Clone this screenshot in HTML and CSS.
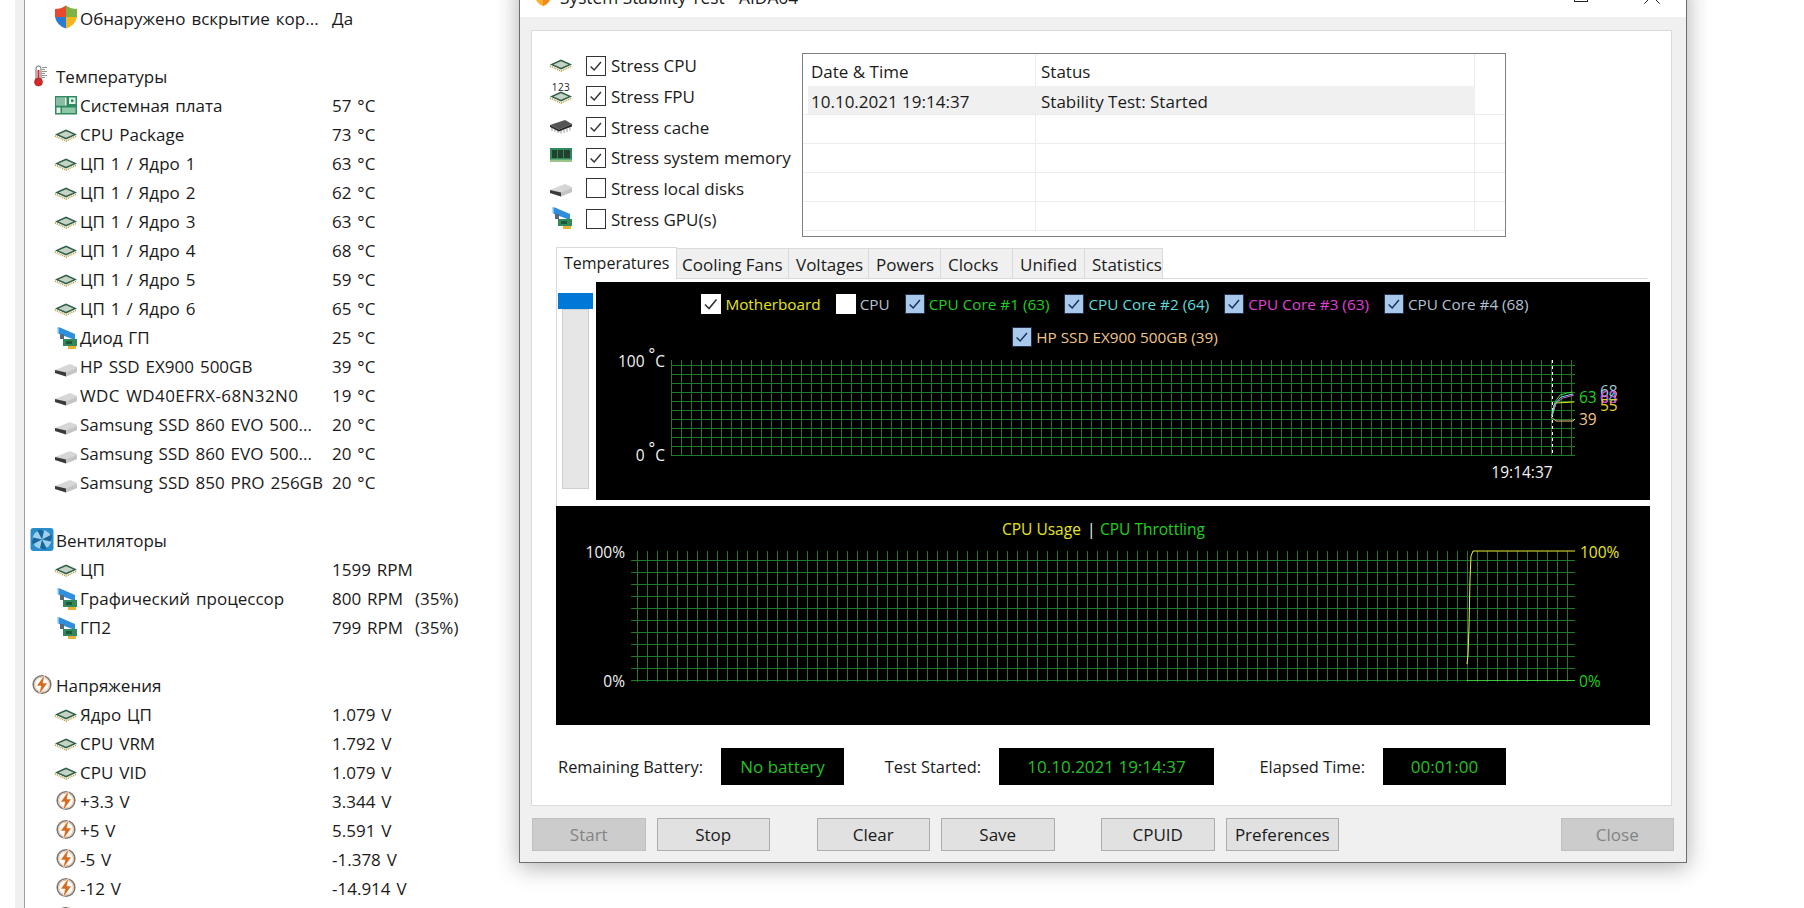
FILE: index.html
```html
<!DOCTYPE html>
<html lang="ru">
<head>
  <meta charset="UTF-8">
  <meta name="viewport" content="width=device-width, initial-scale=1.0">
  <title>System Stability Test - AIDA64</title>
  <link rel="stylesheet" href="styles.css">
</head>
<body>

  <!-- Shared icons -->
  <svg class="icon-defs" aria-hidden="true">
    <symbol id="chip" viewBox="0 -3 24 30">
      <polyline points="1,12 12,17 23,12" fill="none" stroke="#b39a3a" stroke-width="1.6" stroke-dasharray="1 1"/>
      <polygon points="1,10.5 12,5.5 23,10.5 12,15.5" fill="#2f5f48"/>
      <polygon points="4.5,10.5 12,7.2 19.5,10.5 12,13.8" fill="#c5d2c4"/>
    </symbol>
    <symbol id="drive" viewBox="0 -3 24 30">
      <polygon points="1,14 16,8 23,11 23,16 12,20.5 1,17" fill="#d6d6d6"/>
      <polygon points="1,14 12,16.5 12,20.5 1,17" fill="#3a3a3a"/>
      <polygon points="12,16.5 23,12 23,16 12,20.5" fill="#c4c4c4"/>
    </symbol>
    <symbol id="gpu" viewBox="0 -3 24 30">
      <polygon points="3.5,0.5 6,0.5 21,7 21,13 5,7" fill="#2f8fdc"/>
      <polygon points="3.5,0.5 5,0.5 5,7 3.5,6" fill="#7cc0ee"/>
      <rect x="6" y="7" width="4" height="5" fill="#556a78"/>
      <rect x="9" y="12" width="14" height="7" fill="#33885a"/>
      <rect x="12" y="14" width="6" height="3" fill="#1c5a3c"/>
      <rect x="14" y="19" width="8" height="3" fill="#e5b23a"/>
    </symbol>
    <symbol id="bolt" viewBox="0 -3 24 30">
      <circle cx="12" cy="9.5" r="8.8" fill="none" stroke="#777" stroke-width="1.6"/>
      <circle cx="12" cy="9.5" r="7.4" fill="#fff" stroke="#e9b48e" stroke-width="1"/>
      <polygon points="15,-1 6.5,11 11,11 8.5,20.5 17.5,8 13,8" fill="#d9691c" stroke="#fff" stroke-width="0.6"/>
    </symbol>
    <symbol id="tick" viewBox="0 0 20 20">
      <polyline points="4,10.5 8,14.5 15.5,5.5" fill="none" stroke="currentColor" stroke-width="1.6"/>
    </symbol>
    <pattern id="grid-temp-v" patternUnits="userSpaceOnUse" x="75" y="0" width="10" height="20">
      <rect width="1" height="20" fill="#1f7a27"/>
    </pattern>
    <pattern id="grid-temp-h" patternUnits="userSpaceOnUse" x="0" y="83" width="20" height="9">
      <rect width="20" height="1" fill="#1f7a27"/>
    </pattern>
    <pattern id="grid-cpu-v" patternUnits="userSpaceOnUse" x="81" y="0" width="10" height="20">
      <rect width="1" height="20" fill="#1f7a27"/>
    </pattern>
    <pattern id="grid-cpu-h" patternUnits="userSpaceOnUse" x="0" y="54" width="20" height="12">
      <rect width="20" height="1" fill="#1f7a27"/>
    </pattern>
  </svg>

  <div class="desktop">
    <div class="strip"></div>

    <!-- Sensor list behind the window -->
    <div class="sensors">
      <div class="row">
        <svg class="ico" viewBox="0 -3 24 30">
          <path d="M1 1 Q7 1 12 -2.500 L12 9 L1 9 Z" fill="#e8482c"/>
          <path d="M12 -2.500 Q17 1 23 1 L23 9 L12 9 Z" fill="#7db343"/>
          <path d="M1 9 L12 9 L12 20.500 Q3 18 1 9 Z" fill="#2b7bd2"/>
          <path d="M12 9 L23 9 Q21 18 12 20.500 Z" fill="#f5b51c"/>
        </svg>
        <span class="name">Обнаружено вскрытие кор...</span><span>Да</span>
      </div>
      <div class="row"></div>

      <div class="row group">
        <svg class="ico" viewBox="0 -3 24 30">
          <rect x="6" y="0" width="5" height="16" rx="2.500" fill="#fff" stroke="#666"/>
          <rect x="7.500" y="4" width="2" height="12" fill="#d42a2a"/>
          <circle cx="8.500" cy="16" r="4" fill="#d42a2a" stroke="#8a2020" stroke-width="0.600"/>
          <path d="M12 1.500H17M12 3.500H15M12 5.500H17M12 7.500H15M12 9.500H17M12 11.500H15" stroke="#777" stroke-width="0.800"/>
        </svg>
        <span class="name">Температуры</span>
      </div>
      <div class="row">
        <svg class="ico" viewBox="0 -3 24 30">
          <rect x="1" y="1" width="22" height="18.500" fill="#2f8a62"/>
          <rect x="2.500" y="2.500" width="10" height="8" fill="#e4efe8"/>
          <path d="M4 2.500V10.500M6 2.500V10.500M8 2.500V10.500M10 2.500V10.500" stroke="#2f8a62"/>
          <rect x="15" y="2.500" width="6.500" height="6.500" fill="#e4efe8"/>
          <rect x="17" y="4.500" width="2.500" height="2.500" fill="#2f8a62"/>
          <rect x="2.500" y="12.500" width="4" height="5.500" fill="#e4efe8"/>
          <rect x="8" y="12.500" width="13.500" height="5.500" fill="#8cc7a6"/>
        </svg>
        <span class="name">Системная плата</span><span>57 °C</span>
      </div>
      <div class="row"><svg class="ico"><use href="#chip"/></svg><span class="name">CPU Package</span><span>73 °C</span></div>
      <div class="row"><svg class="ico"><use href="#chip"/></svg><span class="name">ЦП 1 / Ядро 1</span><span>63 °C</span></div>
      <div class="row"><svg class="ico"><use href="#chip"/></svg><span class="name">ЦП 1 / Ядро 2</span><span>62 °C</span></div>
      <div class="row"><svg class="ico"><use href="#chip"/></svg><span class="name">ЦП 1 / Ядро 3</span><span>63 °C</span></div>
      <div class="row"><svg class="ico"><use href="#chip"/></svg><span class="name">ЦП 1 / Ядро 4</span><span>68 °C</span></div>
      <div class="row"><svg class="ico"><use href="#chip"/></svg><span class="name">ЦП 1 / Ядро 5</span><span>59 °C</span></div>
      <div class="row"><svg class="ico"><use href="#chip"/></svg><span class="name">ЦП 1 / Ядро 6</span><span>65 °C</span></div>
      <div class="row"><svg class="ico"><use href="#gpu"/></svg><span class="name">Диод ГП</span><span>25 °C</span></div>
      <div class="row"><svg class="ico"><use href="#drive"/></svg><span class="name">HP SSD EX900 500GB</span><span>39 °C</span></div>
      <div class="row"><svg class="ico"><use href="#drive"/></svg><span class="name name-wide">WDC WD40EFRX-68N32N0</span><span>19 °C</span></div>
      <div class="row"><svg class="ico"><use href="#drive"/></svg><span class="name">Samsung SSD 860 EVO 500...</span><span>20 °C</span></div>
      <div class="row"><svg class="ico"><use href="#drive"/></svg><span class="name">Samsung SSD 860 EVO 500...</span><span>20 °C</span></div>
      <div class="row"><svg class="ico"><use href="#drive"/></svg><span class="name">Samsung SSD 850 PRO 256GB</span><span>20 °C</span></div>
      <div class="row"></div>

      <div class="row group">
        <svg class="ico" viewBox="0 -3 24 30">
          <rect x="0.500" y="-2" width="23" height="23" rx="3" fill="#2a8dc9"/>
          <circle cx="12" cy="9.500" r="9.500" fill="#9ed0ec"/>
          <path d="M12 9.500 L7 0 Q12 -1 14 1 Z M12 9.500 L21.500 4.500 Q22.500 9.500 20.500 11.500 Z M12 9.500 L17 19 Q12 20 10 18 Z M12 9.500 L2.500 14.500 Q1.500 9.500 3.500 7.500 Z" fill="#17689f"/>
        </svg>
        <span class="name">Вентиляторы</span>
      </div>
      <div class="row"><svg class="ico"><use href="#chip"/></svg><span class="name">ЦП</span><span>1599 RPM</span></div>
      <div class="row"><svg class="ico"><use href="#gpu"/></svg><span class="name">Графический процессор</span><span class="pre">800 RPM  (35%)</span></div>
      <div class="row"><svg class="ico"><use href="#gpu"/></svg><span class="name">ГП2</span><span class="pre">799 RPM  (35%)</span></div>
      <div class="row"></div>

      <div class="row group"><svg class="ico"><use href="#bolt"/></svg><span class="name">Напряжения</span></div>
      <div class="row"><svg class="ico"><use href="#chip"/></svg><span class="name">Ядро ЦП</span><span>1.079 V</span></div>
      <div class="row"><svg class="ico"><use href="#chip"/></svg><span class="name">CPU VRM</span><span>1.792 V</span></div>
      <div class="row"><svg class="ico"><use href="#chip"/></svg><span class="name">CPU VID</span><span>1.079 V</span></div>
      <div class="row"><svg class="ico"><use href="#bolt"/></svg><span class="name">+3.3 V</span><span>3.344 V</span></div>
      <div class="row"><svg class="ico"><use href="#bolt"/></svg><span class="name">+5 V</span><span>5.591 V</span></div>
      <div class="row"><svg class="ico"><use href="#bolt"/></svg><span class="name">-5 V</span><span>-1.378 V</span></div>
      <div class="row"><svg class="ico"><use href="#bolt"/></svg><span class="name">-12 V</span><span>-14.914 V</span></div>
      <div class="row"><svg class="ico"><use href="#bolt"/></svg></div>
    </div>
  </div>

  <!-- Stability test window -->
  <div class="window">
    <div class="titlebar">
      <svg class="title-icon" viewBox="0 0 18 18">
        <path d="M1 2 H17 V9 Q15 16 9 18 Q3 16 1 9 Z" fill="#f8b026"/>
        <path d="M9 2 H17 V9 Q15 16 9 18 Z" fill="#f08a1a"/>
      </svg>
      <span class="title-text">System Stability Test - AIDA64</span>
      <span class="win-max"></span>
      <svg class="win-close" viewBox="0 0 16 16"><path d="M0.500 0.500L15.500 15.500M15.500 0.500L0.500 15.500" stroke="#222"/></svg>
    </div>

    <div class="panel">
      <div class="top">
        <div class="stress">
          <div class="stress-row">
            <svg class="ico"><use href="#chip"/></svg>
            <span class="check"><svg><use href="#tick"/></svg></span>
            <span>Stress CPU</span>
          </div>
          <div class="stress-row">
            <svg class="ico" viewBox="0 -3 24 30">
              <use href="#chip" x="0" y="-1" width="24" height="30"/>
              <text class="fpu-digits" x="12" y="6.500">123</text>
            </svg>
            <span class="check"><svg><use href="#tick"/></svg></span>
            <span>Stress FPU</span>
          </div>
          <div class="stress-row">
            <svg class="ico" viewBox="0 -3 24 30">
              <path d="M3 13V16M6 14V17M9 15V18M12 15.500V18.500M15 15V18M18 14V17M21 12.500V15.500" stroke="#999"/>
              <polygon points="1,10 16,5 23,9 10,14.500" fill="#555"/>
              <polygon points="1,10 10,14.500 23,9 23,11.500 10,16.500 1,12" fill="#2b2b2b"/>
            </svg>
            <span class="check"><svg><use href="#tick"/></svg></span>
            <span>Stress cache</span>
          </div>
          <div class="stress-row">
            <svg class="ico" viewBox="0 -3 24 30">
              <rect x="1" y="2" width="22" height="14" fill="#2f8a5e"/>
              <path d="M3 4H8V12H3ZM9 4H14V12H9ZM15 4H21V12H15Z" fill="#23402f"/>
              <rect x="1" y="13.500" width="22" height="2.500" fill="#9cc48a"/>
            </svg>
            <span class="check"><svg><use href="#tick"/></svg></span>
            <span>Stress system memory</span>
          </div>
          <div class="stress-row">
            <svg class="ico"><use href="#drive"/></svg>
            <span class="check"></span>
            <span>Stress local disks</span>
          </div>
          <div class="stress-row">
            <svg class="ico"><use href="#gpu"/></svg>
            <span class="check"></span>
            <span>Stress GPU(s)</span>
          </div>
        </div>

        <div class="log">
          <div class="log-row log-head">
            <span class="cell cell-date">Date &amp; Time</span><span class="cell cell-status">Status</span><span class="cell cell-end"></span>
          </div>
          <div class="log-row log-selected">
            <span class="cell cell-date">10.10.2021 19:14:37</span><span class="cell cell-status">Stability Test: Started</span><span class="cell cell-end"></span>
          </div>
          <div class="log-row"><span class="cell cell-date"></span><span class="cell cell-status"></span><span class="cell cell-end"></span></div>
          <div class="log-row"><span class="cell cell-date"></span><span class="cell cell-status"></span><span class="cell cell-end"></span></div>
          <div class="log-row"><span class="cell cell-date"></span><span class="cell cell-status"></span><span class="cell cell-end"></span></div>
          <div class="log-row"><span class="cell cell-date"></span><span class="cell cell-status"></span><span class="cell cell-end"></span></div>
        </div>
      </div>

      <div class="tabs">
        <span class="tab tab-active tab-temp">Temperatures</span>
        <span class="tab tab-fans">Cooling Fans</span>
        <span class="tab tab-volt">Voltages</span>
        <span class="tab tab-power">Powers</span>
        <span class="tab tab-clock">Clocks</span>
        <span class="tab tab-unified">Unified</span>
        <span class="tab tab-stats">Statistics</span>
      </div>

      <div class="tab-pane">
        <div class="scroller">
          <div class="scroll-thumb"></div>
          <div class="scroll-track"></div>
        </div>
        <div class="chart chart-temp">
          <div class="legend">
            <span class="legend-item c-yellow"><span class="legend-box tick-dark"><svg><use href="#tick"/></svg></span>Motherboard</span>
            <span class="legend-item c-grey"><span class="legend-box"></span>CPU</span>
            <span class="legend-item c-green"><span class="legend-box box-on"><svg><use href="#tick"/></svg></span>CPU Core #1 (63)</span>
            <span class="legend-item c-cyan"><span class="legend-box box-on"><svg><use href="#tick"/></svg></span>CPU Core #2 (64)</span>
            <span class="legend-item c-pink"><span class="legend-box box-on"><svg><use href="#tick"/></svg></span>CPU Core #3 (63)</span>
            <span class="legend-item c-grey"><span class="legend-box box-on"><svg><use href="#tick"/></svg></span>CPU Core #4 (68)</span>
          </div>
          <div class="legend">
            <span class="legend-item c-peach"><span class="legend-box box-on"><svg><use href="#tick"/></svg></span>HP SSD EX900 500GB (39)</span>
          </div>

          <svg class="plot" viewBox="0 0 1054 218">
            <rect x="75" y="78" width="901" height="96" fill="url(#grid-temp-v)"/>
            <rect x="75" y="83" width="904" height="91" fill="url(#grid-temp-h)"/>
            <path d="M956.500 78V173" stroke="#fff" stroke-dasharray="3 3"/>
            <polyline points="955,135 960,139 977,139 979,137" class="trace" stroke="#f0c58c"/>
            <polyline points="956,134 960,121 978,120" class="trace" stroke="#e6e61e"/>
            <polyline points="956,133 959,120 964,113 971,111 977,110" class="trace" stroke="#38d838"/>
            <polyline points="956,133 960,121 967,116 978,113" class="trace" stroke="#d060e0"/>
            <polyline points="956,134 958,123 965,115 977,112" class="trace" stroke="#70e0e0"/>
            <text class="axis" x="69" y="85" text-anchor="end">100 <tspan dy="-7">°</tspan><tspan dy="7">C</tspan></text>
            <text class="axis" x="69" y="179" text-anchor="end">0 <tspan dy="-7">°</tspan><tspan dy="7">C</tspan></text>
            <text class="axis" x="926" y="196" text-anchor="middle">19:14:37</text>
            <text class="axis c-steel" x="1004" y="115">68</text>
            <text class="axis c-cyan" x="1004" y="121">64</text>
            <text class="axis c-pink" x="1004" y="121">63</text>
            <text class="axis c-gold" x="1004" y="129">55</text>
            <text class="axis c-green" x="983" y="121">63</text>
            <text class="axis c-peach" x="983" y="143">39</text>
          </svg>
        </div>
      </div>

      <div class="chart chart-cpu">
        <svg class="plot" viewBox="0 0 1094 219">
          <rect x="81" y="45" width="931" height="131" fill="url(#grid-cpu-v)"/>
          <rect x="75" y="54" width="944" height="121" fill="url(#grid-cpu-h)"/>
          <path d="M911 174.500H1019" stroke="#3cc43c"/>
          <polyline points="911,158 912,149 913,121 914,73 915,50 917,45 1019,45" class="trace" stroke="#f0f040"/>
          <text class="axis c-yellow" x="446" y="29">CPU Usage</text>
          <text class="axis" x="531" y="29">|</text>
          <text class="axis c-green" x="544" y="29">CPU Throttling</text>
          <text class="axis" x="69" y="52" text-anchor="end">100%</text>
          <text class="axis" x="69" y="181" text-anchor="end">0%</text>
          <text class="axis c-yellow" x="1024" y="52">100%</text>
          <text class="axis c-green" x="1023" y="181">0%</text>
        </svg>
      </div>

      <div class="info">
        <span class="info-label">Remaining Battery:</span>
        <span class="info-value">No battery</span>
        <span class="info-label">Test Started:</span>
        <span class="info-value">10.10.2021 19:14:37</span>
        <span class="info-label">Elapsed Time:</span>
        <span class="info-value">00:01:00</span>
      </div>
    </div>

    <div class="buttons">
      <div class="btn-group">
        <button class="btn" disabled>Start</button>
        <button class="btn">Stop</button>
      </div>
      <div class="btn-group">
        <button class="btn">Clear</button>
        <button class="btn">Save</button>
      </div>
      <div class="btn-group">
        <button class="btn">CPUID</button>
        <button class="btn">Preferences</button>
      </div>
      <button class="btn btn-close" disabled>Close</button>
    </div>
  </div>

</body>
</html>
```

FILE: styles.css
```css
/* Basic Reset */
* {
  margin: 0;
  padding: 0;
  box-sizing: border-box;
}

body {
  position: relative;
  height: 908px;
  overflow: hidden;
  font-family: "Open Sans", "Liberation Sans", sans-serif;
  font-size: 17px;
  background-color: #fff;
  color: #1a1a1a;
}

.icon-defs {
  position: absolute;
  width: 0;
  height: 0;
}

.ico {
  flex-shrink: 0;
  width: 24px;
  height: 30px;
}

/* Sensor list */
.desktop {
  display: flex;
  height: 908px;
}

.strip {
  width: 10px;
  margin-left: 15px;
  background-color: #f0f0f0;
  border-right: 1px solid #a0a0a0;
}

.sensors {
  padding-top: 4px;
}

.row {
  display: flex;
  align-items: center;
  height: 29px;
  padding-left: 29px;
  white-space: nowrap;
  word-spacing: 1.5px;
}

.row .ico {
  margin: 2px 2px 0 0;
}

.row.group {
  padding-left: 5px;
}

.name {
  width: 252px;
}

.name-wide {
  letter-spacing: 0.4px;
}

.pre {
  white-space: pre;
}

/* Window */
.window {
  position: absolute;
  left: 519px;
  top: -24px;
  width: 1168px;
  height: 887px;
  background-color: #f0f0f0;
  border: 1px solid #6e6e6e;
  box-shadow: 0 4px 22px rgba(0, 0, 0, 0.32);
}

.titlebar {
  display: flex;
  align-items: center;
  height: 40px;
  padding-left: 14px;
  background-color: #fff;
}

.title-icon {
  width: 18px;
  height: 18px;
  margin-right: 8px;
}

.title-text {
  flex-grow: 1;
  font-size: 17.3px;
}

.win-max {
  width: 14px;
  height: 14px;
  margin: 0 56px 4px 0;
  border: 1px solid #222;
}

.win-close {
  width: 16px;
  height: 16px;
  margin: 0 26px 2px 0;
}

.panel {
  height: 776px;
  margin: 13px 14px 0 11px;
  padding-top: 19.4px;
  background-color: #fff;
  border: 1px solid #dadada;
}

.top {
  display: flex;
  align-items: flex-start;
  padding-left: 17px;
}

.stress {
  width: 253px;
}

.stress-row {
  display: flex;
  align-items: center;
  height: 30.7px;
}

.stress-row .ico {
  margin-right: 13px;
}

.check {
  display: block;
  flex-shrink: 0;
  width: 20px;
  height: 20px;
  margin-right: 5px;
  border: 1px solid #333;
  color: #333;
}

.check svg {
  display: block;
  width: 18px;
  height: 18px;
}

.fpu-digits {
  font-size: 10px;
  text-anchor: middle;
  letter-spacing: 0.5px;
  fill: #222;
}

/* Log table */
.log {
  width: 704px;
  height: 184px;
  margin-top: 3px;
  border: 1px solid #7f7f7f;
  overflow: hidden;
}

.log-row {
  display: flex;
  height: 29px;
  border-bottom: 1px solid #ececec;
}

.log-head {
  height: 32px;
  border-bottom: none;
}

.cell {
  display: block;
  line-height: 28px;
  white-space: nowrap;
  border-right: 1px solid #ececec;
}

.cell-date {
  width: 233px;
  padding-left: 8px;
}

.cell-status {
  width: 439px;
  padding-left: 5px;
}

.cell-end {
  border-right: none;
  flex-grow: 1;
}

.log-head .cell {
  line-height: 36px;
}

.log-selected .cell {
  line-height: 31px;
}

.log-selected .cell-date {
  width: 228px;
  margin-left: 5px;
  padding-left: 3px;
  background-color: #f0f0f0;
  border-right: none;
}

.log-selected .cell-status {
  background-color: #f0f0f0;
  border-right: none;
}

/* Tabs */
.tabs {
  display: flex;
  align-items: flex-end;
  height: 32px;
  margin: 8.6px 0 0 24px;
}

.tab {
  display: block;
  height: 30px;
  padding-left: 7px;
  line-height: 32px;
  background-color: #f0f0f0;
  border: 1px solid #dadada;
  border-left: none;
  border-bottom: none;
  white-space: nowrap;
}

.tab-active {
  position: relative;
  top: 1px;
  height: 32px;
  padding-left: 7px;
  font-size: 16px;
  line-height: 30px;
  background-color: #fff;
  border-left: 1px solid #dadada;
}

.tab-temp { width: 121px; }
.tab-fans { width: 112px; padding-left: 5px; }
.tab-volt { width: 80px; }
.tab-power { width: 72px; }
.tab-clock { width: 72px; }
.tab-unified { width: 72px; }
.tab-stats { width: 78px; }

.tab-pane {
  display: flex;
  width: 1091px;
  height: 228px;
  margin-left: 24px;
  padding-top: 3px;
  border-top: 1px solid #dadada;
  border-left: 1px solid #dadada;
}

.scroller {
  flex-shrink: 0;
  width: 39px;
  padding-top: 11px;
}

.scroll-thumb {
  width: 35px;
  height: 16px;
  margin-left: 1px;
  background-color: #0078d7;
}

.scroll-track {
  width: 27px;
  height: 180px;
  margin-left: 5px;
  background-color: #e6e6e6;
  border: 1px solid #cfcfcf;
}

/* Charts */
.chart {
  position: relative;
  flex-shrink: 0;
  background-color: #000;
  font-size: 15.3px;
}

.chart-temp {
  width: 1054px;
  height: 218px;
  padding: 12px 16px 0 0;
}

.chart-cpu {
  width: 1094px;
  height: 219px;
  margin-left: 24px;
}

.plot {
  position: absolute;
  left: 0;
  top: 0;
  width: 100%;
  height: 100%;
}

.axis {
  font-size: 15.5px;
  fill: #f2f2f2;
}

.trace {
  fill: none;
  stroke-width: 1;
}

.legend {
  display: flex;
  justify-content: center;
  gap: 15px;
  height: 33px;
}

.legend-item {
  display: flex;
  align-items: flex-start;
  gap: 4px;
  line-height: 20px;
  white-space: nowrap;
}

.legend-box {
  display: block;
  width: 20px;
  height: 20px;
  background-color: #fff;
}

.legend-box svg {
  display: block;
  width: 20px;
  height: 20px;
}

.tick-dark {
  color: #333;
}

.box-on {
  background-color: #a9c9ec;
  border: 1px solid #22304a;
  color: #12305a;
}

.box-on svg {
  width: 18px;
  height: 18px;
}

.c-yellow { color: #e6e61e; fill: #e6e61e; }
.c-grey { color: #b4c0d4; fill: #b4c0d4; }
.c-green { color: #1fd01f; fill: #1fd01f; }
.c-cyan { color: #5fdcdc; fill: #5fdcdc; }
.c-pink { color: #e040d8; fill: #e040d8; }
.c-peach { color: #f0c58c; fill: #f0c58c; }
.c-steel { fill: #a8c8d8; }
.c-gold { fill: #e6d030; }

/* Info row */
.info {
  display: grid;
  grid-template-columns: 165px 123px 155px 215px 169px 123px;
  height: 37px;
  margin: 23px 0 0 24px;
}

.info-label {
  padding-right: 18px;
  font-size: 16.4px;
  line-height: 37px;
  text-align: right;
  white-space: nowrap;
}

.info-value {
  line-height: 37px;
  text-align: center;
  color: #26c026;
  background-color: #000;
  white-space: nowrap;
}

/* Buttons */
.buttons {
  display: flex;
  gap: 46.5px;
  padding: 12px 12px 0 12px;
}

.btn-group {
  display: flex;
  gap: 11px;
}

.btn {
  width: 113.5px;
  height: 33px;
  font-family: inherit;
  font-size: 17px;
  color: #1a1a1a;
  background-color: #e1e1e1;
  border: 1px solid #adadad;
}

.btn:disabled {
  color: #838383;
  background-color: #cccccc;
  border-color: #bfbfbf;
}

.btn-close {
  margin-left: auto;
}
```
